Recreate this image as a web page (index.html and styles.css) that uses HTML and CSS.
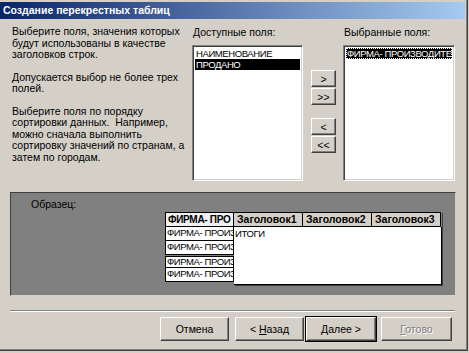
FILE: index.html
```html
<!DOCTYPE html>
<html lang="ru">
<head>
    <meta charset="UTF-8">
    <title>Создание перекрестных таблиц</title>
    <link rel="stylesheet" href="styles.css">
</head>
<body>
    <div class="window">
        <div class="titlebar">Создание перекрестных таблиц</div>

        <div class="main">
            <div class="intro">
                <p>Выберите поля, значения которых<br>будут использованы в качестве<br>заголовков строк.</p>
                <p>Допускается выбор не более трех<br>полей.</p>
                <p>Выберите поля по порядку<br>сортировки данных.&nbsp; Например,<br>можно сначала выполнить<br>сортировку значений по странам, а<br>затем по городам.</p>
            </div>

            <div class="field-col">
                <div class="label">Доступные поля:</div>
                <div class="listbox">
                    <div class="item">НАИМЕНОВАНИЕ</div>
                    <div class="item selected">ПРОДАНО</div>
                </div>
            </div>

            <div class="move-buttons">
                <button class="move">&gt;</button>
                <button class="move">&gt;&gt;</button>
                <button class="move move-back">&lt;</button>
                <button class="move">&lt;&lt;</button>
            </div>

            <div class="field-col field-col-right">
                <div class="label">Выбранные поля:</div>
                <div class="listbox">
                    <div class="item selected focused">ФИРМА- ПРОИЗВОДИТЕЛЬ</div>
                </div>
            </div>
        </div>

        <div class="sample">
            <div class="sample-label">Образец:</div>
            <div class="sample-table">
                <div class="row-heads">
                    <div class="head-cell first">ФИРМА- ПРО</div>
                    <div class="row-cell">ФИРМА- ПРОИЗ</div>
                    <div class="row-cell">ФИРМА- ПРОИЗ</div>
                    <div class="row-cell split">ФИРМА- ПРОИЗ</div>
                    <div class="row-cell">ФИРМА- ПРОИЗ</div>
                </div>
                <div class="col-block">
                    <div class="col-heads">
                        <div class="head-cell">Заголовок1</div>
                        <div class="head-cell">Заголовок2</div>
                        <div class="head-cell">Заголовок3</div>
                    </div>
                    <div class="values"><span class="caps">ИТОГИ</span></div>
                </div>
            </div>
        </div>

        <div class="separator"></div>

        <div class="actions">
            <button class="btn">Отмена</button>
            <button class="btn btn-back">&lt; <u>Н</u>азад</button>
            <button class="btn btn-default"><u>Д</u>алее &gt;</button>
            <button class="btn btn-disabled" disabled><u>Г</u>отово</button>
        </div>
    </div>
</body>
</html>
```

FILE: styles.css
```css
body {
    margin: 0;
    background-color: #d4d0c8;
    font-family: "Liberation Sans", Arial, sans-serif;
    font-size: 10.5px;
    color: #000;
}
.window {
    box-sizing: border-box;
    width: 468px;
    height: 351px;
    padding-top: 2px;
    background: #d4d0c8;
    border-right: 1px solid #404040;
    border-bottom: 1px solid #404040;
    box-shadow: inset -1px -1px #808080;
}
.titlebar {
    height: 17px;
    line-height: 17px;
    padding-left: 3px;
    margin-right: 2px;
    background: linear-gradient(to right, #0a246a, #a6caf0);
    color: #fff;
    font-weight: bold;
    font-size: 10.5px;
}
.main {
    display: flex;
    padding: 7px 0 0 12px;
    height: 155px;
}
.intro {
    width: 180px;
}
.intro p {
    margin: 0 0 11px 0;
    line-height: 11.5px;
}
.field-col {
    width: 111px;
}
.field-col-right {
    width: 112px;
}
.label {
    height: 12px;
    line-height: 12px;
    padding-left: 1px;
}
.listbox {
    box-sizing: border-box;
    height: 136px;
    margin-top: 7px;
    padding: 2px;
    background: #fff;
    border: 1px solid;
    border-color: #808080 #fff #fff #808080;
    box-shadow: inset 1px 1px #404040, inset -1px -1px #d4d0c8;
    overflow: hidden;
}
/* upper-case names: Tahoma caps are narrower than Arial ones */
.item,
.row-cell,
.caps {
    font-size: 9.5px;
    letter-spacing: -0.4px;
}
.item {
    height: 11px;
    line-height: 11px;
    padding-left: 1px;
    white-space: nowrap;
    overflow: hidden;
}
.item.selected {
    background: #000;
    color: #fff;
}
.item.focused {
    outline: 1px dotted #fff;
    outline-offset: -1px;
}
.move-buttons {
    display: flex;
    flex-direction: column;
    width: 25px;
    margin: 44px 7px 0 8px;
}
button {
    font-family: "Liberation Sans", Arial, sans-serif;
    font-size: 10.5px;
    color: #000;
    background: #d4d0c8;
    border: 1px solid;
    border-color: #fff #404040 #404040 #fff;
    box-shadow: inset -1px -1px #808080;
    padding: 0;
}
.move {
    height: 17px;
    margin-bottom: 1px;
}
.move-back {
    margin-top: 12px;
}
.sample {
    box-sizing: border-box;
    width: 446px;
    height: 104px;
    margin: 11px 0 0 10px;
    padding: 5px 0 0 20px;
    background: #808080;
    border: 1px solid;
    border-color: #404040 #d4d0c8 #d4d0c8 #404040;
}
.sample-label {
    height: 12px;
    line-height: 12px;
}
.sample-table {
    display: flex;
    margin: 2px 0 0 134px;
}
.row-heads {
    width: 69px;
    display: flex;
    flex-direction: column;
}
.head-cell {
    box-sizing: border-box;
    height: 15px;
    line-height: 13px;
    border: 1px solid #000;
    background: #d4d0c8;
    font-weight: bold;
    padding-left: 2px;
    white-space: nowrap;
    overflow: hidden;
}
.head-cell.first {
    background: #f0f0f0;
    font-size: 10px;
    letter-spacing: -0.3px;
}
.row-cell {
    box-sizing: border-box;
    height: 14px;
    line-height: 12px;
    background: #fff;
    border: 1px solid #000;
    border-top: none;
    padding-left: 1px;
    white-space: nowrap;
    overflow: hidden;
}
.row-cell.split {
    border-top: 1px solid #000;
    margin-top: 1px;
    height: 12px;
    line-height: 10px;
}
.col-block {
    display: flex;
    flex-direction: column;
    width: 208px;
    box-shadow: 1px 1px #404040;
}
.col-heads {
    display: flex;
}
.col-heads .head-cell {
    width: 69px;
    border-left: none;
    padding-left: 3px;
}
.values {
    height: 57px;
    background: #fff;
    line-height: 12px;
    padding-left: 1px;
    border-right: 1px solid #000;
    border-bottom: 1px solid #000;
}
.separator {
    width: 445px;
    height: 0;
    margin: 14px 0 0 10px;
    border-top: 1px solid #808080;
    border-bottom: 1px solid #fff;
}
.actions {
    display: flex;
    justify-content: flex-end;
    padding: 5px 15px 0 0;
}
.btn {
    width: 69px;
    height: 24px;
}
.btn-back {
    margin: 0 2px 0 6px;
}
.btn-default {
    width: 70px;
    margin-right: 5px;
    outline: 1px solid #000;
}
.btn-disabled {
    width: 71px;
    color: #808080;
    text-shadow: 1px 1px #fff;
}
u {
    text-decoration: underline;
}
```
